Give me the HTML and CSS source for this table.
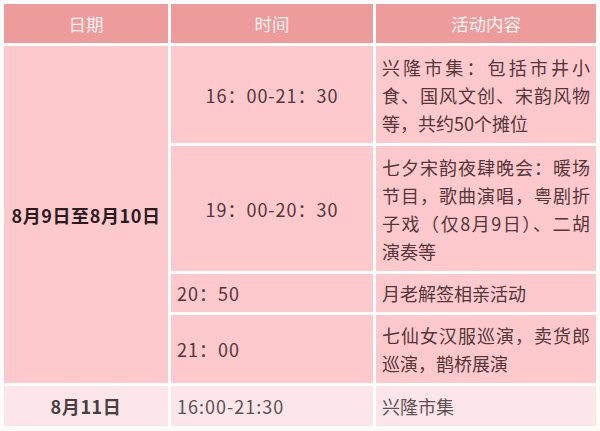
FILE: index.html
```html
<!DOCTYPE html>
<html lang="zh">
<head>
<meta charset="utf-8">
<link rel="stylesheet" href="styles.css">
</head>
<body>
<table class="sched">
  <colgroup>
    <col class="c-date">
    <col class="c-time">
    <col class="c-act">
  </colgroup>
  <thead>
    <tr class="r-head">
      <th>日期</th>
      <th>时间</th>
      <th>活动内容</th>
    </tr>
  </thead>
  <tbody>
    <tr class="r1">
      <td class="date" rowspan="4">8月9日至8月10日</td>
      <td class="time center">16：00-21：30</td>
      <td class="act">兴隆市集：包括市井小食、国风文创、宋韵风物等，共约50个摊位</td>
    </tr>
    <tr class="r2">
      <td class="time center">19：00-20：30</td>
      <td class="act">七夕宋韵夜肆晚会：暖场节目，歌曲演唱，粤剧折子戏（仅8月9日）、二胡演奏等</td>
    </tr>
    <tr class="r3">
      <td class="time">20：50</td>
      <td class="act">月老解签相亲活动</td>
    </tr>
    <tr class="r4">
      <td class="time">21：00</td>
      <td class="act">七仙女汉服巡演，卖货郎巡演，鹊桥展演</td>
    </tr>
    <tr class="r5 light">
      <td class="date">8月11日</td>
      <td class="time">16:00-21:30</td>
      <td class="act">兴隆市集</td>
    </tr>
  </tbody>
</table>
</body>
</html>
```
FILE: styles.css
```css
html, body {
  margin: 0;
  padding: 0;
  background: #fff8f9;
}
body {
  padding: 1px 1px 0 1px;
  font-family: "Noto Sans CJK SC", "Noto Sans", sans-serif;
}
.sched {
  border-collapse: separate;
  border-spacing: 3px;
  table-layout: fixed;
  width: 598px;
  background: #ffffff;
}
.c-date { width: 164px; }
.c-time { width: 202px; }
.c-act { width: 220px; }

.sched th {
  background: #ee9b9c;
  color: #fff3f3;
  font-weight: normal;
  font-size: 17.5px;
  line-height: 28px;
  padding: 0;
  text-align: center;
  vertical-align: middle;
}
.sched td {
  background: #fec9cd;
  color: #553639;
  font-size: 18px;
  line-height: 28px;
  padding: 0 6px;
  vertical-align: middle;
  text-align: left;
}
.sched td.time { letter-spacing: 1px; }
.sched td.center { text-align: center; }
.sched td.act { text-align: justify; }
.sched td.date {
  text-align: center;
  font-weight: bold;
  letter-spacing: 0.6px;
  color: #2a1c1e;
}
.r-head { height: 39px; }
.r1 { height: 97px; }
.r2 { height: 125px; }
.r3 { height: 38px; }
.r4 { height: 68px; }
.r5 { height: 40px; }

.sched tr.light td {
  background: #fde6ea;
  color: #5d5052;
}
.sched tr.light td.date { color: #4a3d3f; }
```
